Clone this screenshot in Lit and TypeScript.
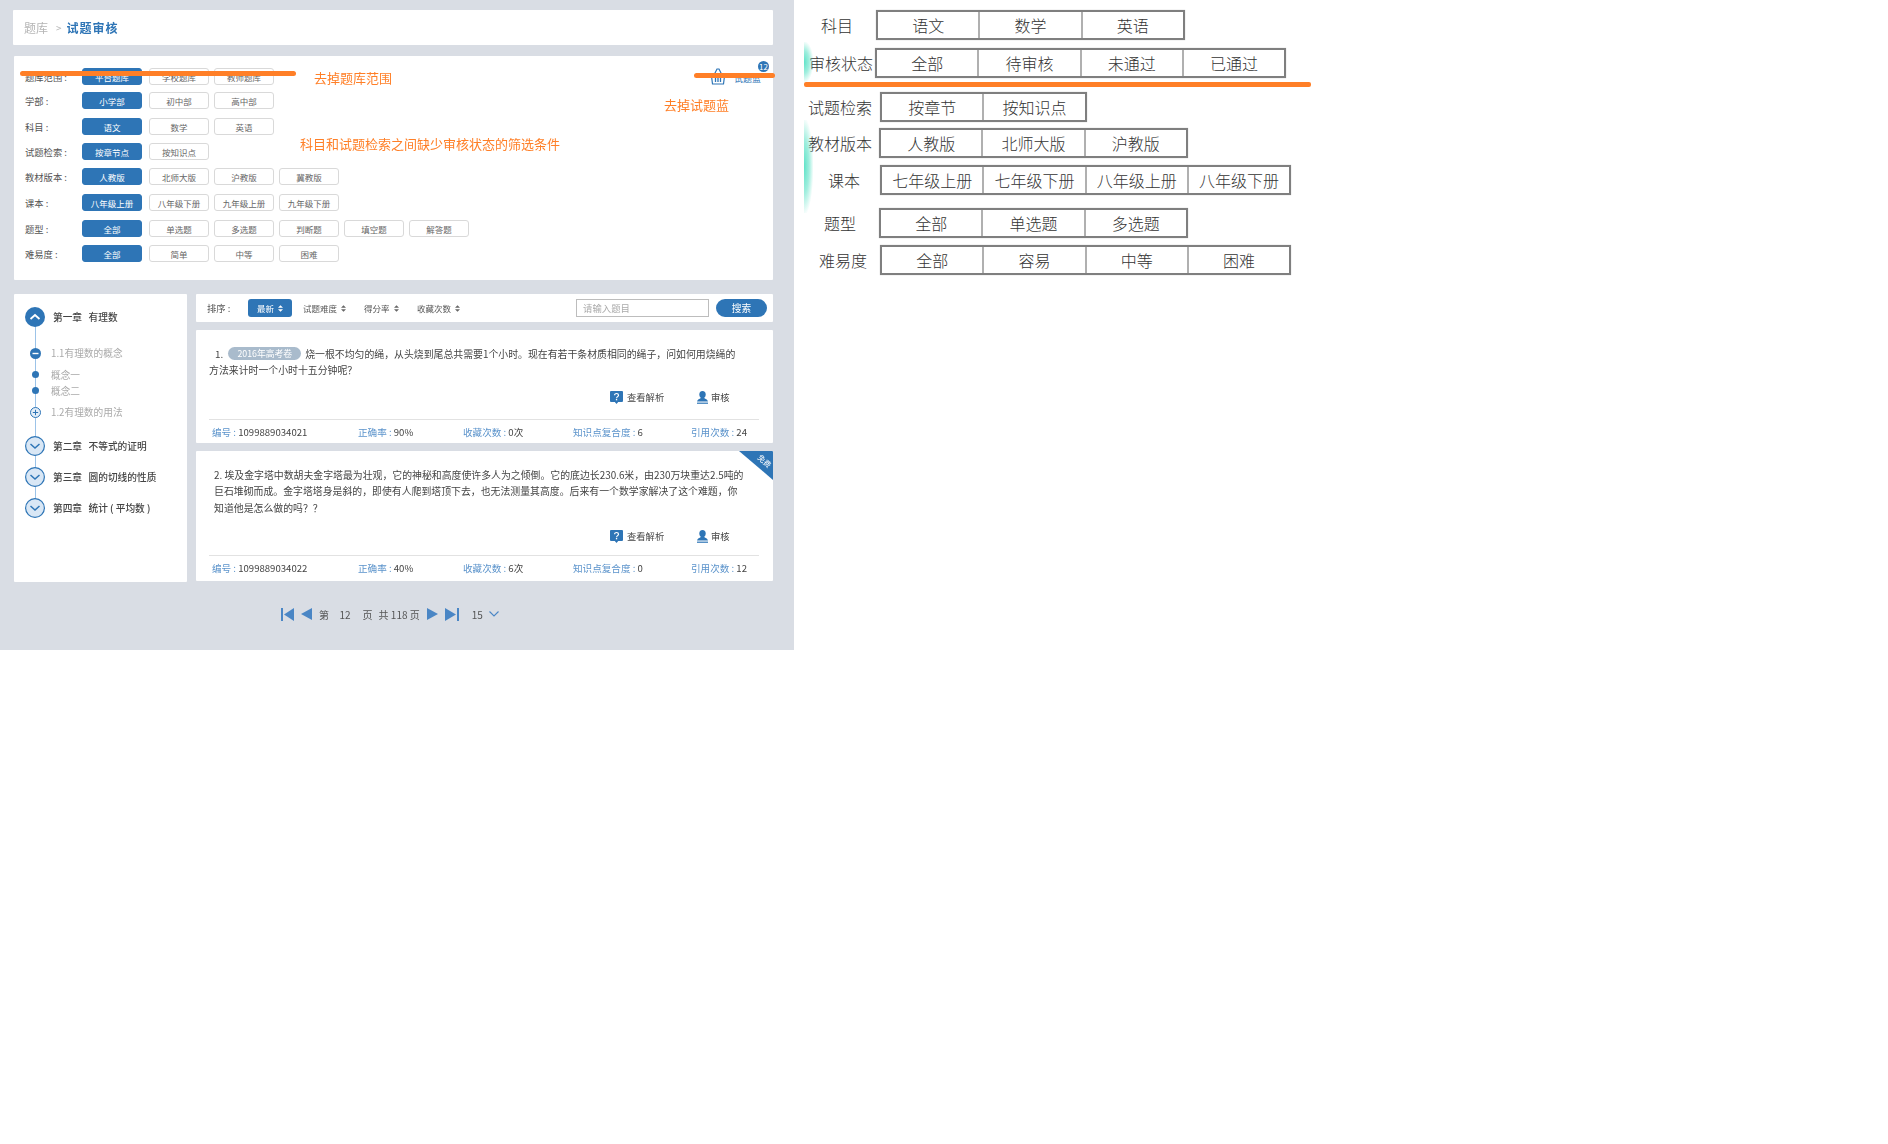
import { LitElement, html, css, svg } from "lit";
import { customElement } from "lit/decorators.js";

const FILTERS: [string, string[]][] = [
  ["题库范围 :", ["平台题库", "学校题库", "教师题库"]],
  ["学部 :", ["小学部", "初中部", "高中部"]],
  ["科目 :", ["语文", "数学", "英语"]],
  ["试题检索 :", ["按章节点", "按知识点"]],
  ["教材版本 :", ["人教版", "北师大版", "沪教版", "冀教版"]],
  ["课本 :", ["八年级上册", "八年级下册", "九年级上册", "九年级下册"]],
  ["题型 :", ["全部", "单选题", "多选题", "判断题", "填空题", "解答题"]],
  ["难易度 :", ["全部", "简单", "中等", "困难"]],
];

const TABLES = [
  { label: "科目", lx: 821, tx: 876, mt: 10, cells: ["语文", "数学", "英语"] },
  { label: "审核状态", lx: 809, tx: 875, mt: 8, cells: ["全部", "待审核", "未通过", "已通过"] },
  { label: "试题检索", lx: 808, tx: 880, mt: 5, cells: ["按章节", "按知识点"] },
  { label: "教材版本", lx: 808, tx: 879, mt: 6, cells: ["人教版", "北师大版", "沪教版"] },
  { label: "课本", lx: 828, tx: 880, mt: 7, cells: ["七年级上册", "七年级下册", "八年级上册", "八年级下册"] },
  { label: "题型", lx: 824, tx: 879, mt: 13, cells: ["全部", "单选题", "多选题"] },
  { label: "难易度", lx: 819, tx: 880, mt: 7, cells: ["全部", "容易", "中等", "困难"] },
];

const sortArrow = svg`<svg class="sa" width="5" height="7" viewBox="0 0 6 8"><path d="M3 0l3 3H0zM3 8L0 5h6z" fill="currentColor"/></svg>`;
const chevUp = html`<svg width="20" height="20" viewBox="0 0 20 20"><circle cx="10" cy="10" r="10" fill="#2e75b6"/><path d="M5.5 12l4.5-4 4.5 4" fill="none" stroke="#fff" stroke-width="1.8"/></svg>`;
const chevDown = html`<svg width="20" height="20" viewBox="0 0 20 20"><circle cx="10" cy="10" r="9.4" fill="#d9e7f5" stroke="#2e75b6" stroke-width="1.2"/><path d="M5.5 8l4.5 4 4.5-4" fill="none" stroke="#2e75b6" stroke-width="1.5"/></svg>`;
const minus = html`<svg width="11" height="11" viewBox="0 0 11 11"><circle cx="5.5" cy="5.5" r="5.5" fill="#2e75b6"/><rect x="2.5" y="4.8" width="6" height="1.4" fill="#fff"/></svg>`;
const plus = html`<svg width="11" height="11" viewBox="0 0 11 11"><circle cx="5.5" cy="5.5" r="5" fill="#e4eef8" stroke="#2e75b6"/><path d="M2.8 5.5h5.4M5.5 2.8v5.4" stroke="#2e75b6"/></svg>`;
const dot = html`<svg width="7" height="7" viewBox="0 0 7 7"><circle cx="3.5" cy="3.5" r="3.5" fill="#2e75b6"/></svg>`;
const helpIcon = html`<svg width="13" height="13" viewBox="0 0 13 13"><path d="M1 0h11a1 1 0 0 1 1 1v9a1 1 0 0 1-1 1H8.2L6.5 13 4.8 11H1a1 1 0 0 1-1-1V1a1 1 0 0 1 1-1z" fill="#2e75b6"/><path d="M4.6 4.2c0-2.3 3.9-2.3 3.9 0 0 1.5-1.9 1.4-1.9 3" fill="none" stroke="#fff" stroke-width="1.2"/><rect x="5.9" y="8" width="1.3" height="1.3" fill="#fff"/></svg>`;
const userIcon = html`<svg width="11" height="13" viewBox="0 0 11 13"><ellipse cx="5.5" cy="3.6" rx="3.2" ry="3.6" fill="#2e75b6"/><path d="M0 10.4c.4-2 2.6-2.4 3.8-3.4h3.4c1.2 1 3.4 1.4 3.8 3.4z" fill="#2e75b6"/><rect y="11.6" width="11" height="1.2" fill="#2e75b6"/></svg>`;

@customElement("app-root")
export class AppRoot extends LitElement {
  static styles = css`
    :host {
      display: block;
      width: 1888px;
      min-height: 1144px;
      background: #fff;
      font-family: "Noto Sans CJK SC", "Liberation Sans", sans-serif;
    }
    .page { display: flex; align-items: flex-start; }
    .left {
      position: relative;
      flex: 0 0 794px;
      height: 650px;
      background: #d9dde4;
      overflow: hidden;
    }
    .shot {
      display: flex;
      flex-direction: column;
      padding: 10px 21px 0 14px;
      filter: blur(0.35px);
      color: #444;
      font-size: 9.7px;
    }
    .card { background: #fff; border-radius: 1px; }
    .crumb {
      height: 35px;
      margin-left: -1px;
      display: flex;
      align-items: center;
      padding-left: 11px;
      font-size: 12px;
      color: #b5b5b5;
    }
    .crumb .sep { margin: 0 5px 0 8px; font-size: 10px; }
    .crumb b { color: #2e75b6; font-weight: 700; letter-spacing: 1px; font-size: 12px; }
    .filters {
      position: relative;
      margin-top: 11px;
      height: 224px;
      box-sizing: border-box;
      padding: 12px 0 0 11px;
      display: flex;
      flex-direction: column;
      gap: 8px;
    }
    .frow { display: flex; align-items: center; height: 17px; }
    .frow:nth-child(2) { margin-top: -1px; }
    .frow:nth-child(3), .frow:nth-child(6), .frow:nth-child(7) { margin-top: 1px; }
    .flabel { width: 57px; color: #555; white-space: nowrap; font-size: 9.3px; }
    .fbtns { display: flex; gap: 5px; }
    .fbtn {
      box-sizing: border-box;
      width: 60px;
      height: 17px;
      border: 1px solid #d9d9d9;
      border-radius: 3px;
      display: flex;
      align-items: center;
      justify-content: center;
      background: #fff;
      color: #666;
      font-size: 8.5px;
      white-space: nowrap;
    }
    .fbtn.on { background: #2e75b6; border-color: #2e75b6; color: #fff; margin-right: 2px; }
    .basket { position: absolute; right: -2px; top: 5px; width: 65px; height: 25px; color: #2e75b6; }
    .basket svg { position: absolute; left: 0; top: 7px; }
    .basket span.t { position: absolute; left: 24px; top: 12px; font-size: 9px; line-height: 12px; }
    .basket .badge {
      position: absolute;
      right: 6px;
      top: 0;
      width: 11px;
      height: 11px;
      border-radius: 50%;
      background: #2e75b6;
      color: #fff;
      font-size: 8px;
      line-height: 11px;
      text-align: center;
    }
    .bottom { display: flex; gap: 9px; margin-top: 14px; height: 288px; }
    .side { position: relative; flex: 0 0 173px; box-sizing: border-box; padding-top: 13px; }
    .tl-line { position: absolute; left: 20.5px; top: 23px; width: 1px; height: 191px; background: #9cc3e8; }
    .node { position: relative; display: flex; align-items: center; height: 16px; white-space: nowrap; color: #aaa; }
    .node .ic { flex: 0 0 42px; display: flex; justify-content: center; margin-right: -5px; }
    .node .ic svg { display: block; }
    .node.ch { height: 20px; color: #444; font-weight: 500; }
    .node.ch .ic { margin-right: -3px; }
    .ch .n { margin-right: 6.5px; }
    .m18 { margin-top: 18px; } .m5 { margin-top: 5.5px; } .m16 { margin-top: 16px; } .m11 { margin-top: 11px; }
    .main { flex: 1; display: flex; flex-direction: column; gap: 8px; }
    .sort { height: 28px; display: flex; align-items: center; padding: 0 6px 0 11px; color: #555; }
    .sort .lb { flex: 0 0 41px; font-size: 9.3px; }
    .sitem { display: flex; align-items: center; gap: 4px; white-space: nowrap; font-size: 8.5px; }
    .sitem .sa { color: #666; }
    .w61 { flex: 0 0 61px; } .w53 { flex: 0 0 53px; }
    .sitem.on {
      flex: 0 0 44px;
      height: 18px;
      justify-content: center;
      margin-right: 11px;
      border-radius: 3px;
      background: #2e75b6;
      color: #fff;
    }
    .sitem.on .sa { color: #fff; }
    .grow { flex: 1; }
    .inp {
      box-sizing: border-box;
      width: 133px;
      height: 18px;
      margin-right: 7px;
      border: 1px solid #bdbdbd;
      padding-left: 6px;
      line-height: 16px;
      color: #aaa;
      font-size: 9.4px;
    }
    .go {
      width: 51px;
      height: 18px;
      border-radius: 9px;
      background: #2e75b6;
      color: #fff;
      text-align: center;
      line-height: 18px;
    }
    .q { position: relative; display: flex; flex-direction: column; overflow: hidden; box-sizing: border-box; padding: 15.5px 14px 3px 13px; color: #444; }
    .q1 { height: 113px; }
    .q2 { height: 130px; padding-bottom: 5px; }
    .body { flex: 1; line-height: 16.8px; white-space: nowrap; font-size: 9.9px; }
    .q2 .body { padding-left: 5px; }
    .q1 .l1 { padding-left: 6px; display: flex; align-items: center; }
    .pill {
      width: 73px;
      height: 13px;
      margin: 0 4px 0 5px;
      border-radius: 7px;
      background: #a9bbcc;
      color: #fff;
      font-size: 8.8px;
      line-height: 13px;
      text-align: center;
    }
    .acts { display: flex; align-items: center; height: 18px; padding-left: 401px; margin-bottom: 13px; font-size: 9.3px; }
    .q2 .acts { margin-bottom: 10px; }
    .act { display: flex; align-items: center; gap: 4px; }
    .act svg { display: block; }
    .act.a1 { flex: 0 0 87px; }
    .act.a2 { gap: 3px; }
    .foot {
      border-top: 1px solid #e2e2e2;
      padding: 4px 0 0 3px;
      display: grid;
      grid-template-columns: 146px 105px 110px 118px 68px;
      line-height: 16px;
      white-space: pre;
      color: #444;
      font-size: 9.6px;
    }
    .foot i { font-style: normal; color: #5b93cb; }
    .corner {
      position: absolute;
      right: 0;
      top: 0;
      width: 34px;
      height: 29px;
      background: #2e75b6;
      clip-path: polygon(0 0, 100% 0, 100% 100%);
    }
    .corner span {
      position: absolute;
      right: 1px;
      top: 5px;
      transform: rotate(42deg);
      color: #fff;
      font-size: 7.5px;
      line-height: 10px;
    }
    .pager {
      display: flex;
      align-items: center;
      height: 16px;
      margin: 24px 0 0 267px;
      color: #555;
      font-size: 10px;
      white-space: nowrap;
    }
    .pager svg { display: block; flex: none; }
    .ml7 { margin-left: 7px; } .ml12 { margin-left: 12px; } .ml11 { margin-left: 10.5px; } .ml6 { margin-left: 6px; } .ml13 { margin-left: 13px; }
    .note { position: absolute; color: #ff7f27; font-size: 13px; line-height: 18px; white-space: nowrap; }
    .n1 { left: 314px; top: 69px; }
    .n2 { left: 664px; top: 96px; }
    .n3 { left: 300px; top: 135px; }
    .strike { position: absolute; background: #ff7f27; border-radius: 3px; height: 5px; }
    .s1 { left: 20px; top: 71px; width: 276px; }
    .s2 { left: 694px; top: 73px; width: 81px; }

    .right { position: relative; flex: 1; height: 300px; color: #333; font-weight: 300; }
    .trow { display: flex; align-items: center; height: 30px; font-size: 16px; white-space: nowrap; }
    .tlabel { flex: none; }
    .tbl {
      display: flex;
      flex: none;
      box-sizing: border-box;
      height: 30px;
      border: 2px solid #7f7f7f;
      box-shadow: 0 0 1px #bbb;
    }
    .tcell {
      box-sizing: border-box;
      width: 102.3px;
      display: flex;
      align-items: center;
      justify-content: center;
      border-left: 2px solid #b0b0b0;
    }
    .tcell:first-child { border-left: 0; width: 100.3px; }
    .rule { height: 5px; margin: 4px 0 0 10px; width: 507px; background: #ff7f27; border-radius: 2px; }
    .glow { position: absolute; left: 10px; width: 9px; background: radial-gradient(ellipse at left center, #5fe3c8 0%, rgba(95, 227, 200, 0.6) 40%, rgba(95, 227, 200, 0) 75%); }
    .g1 { top: 42px; height: 40px; }
    .g2 { top: 120px; height: 93px; }
  `;

  private filters() {
    return FILTERS.map(
      ([label, btns]) => html`<div class="frow">
        <div class="flabel">${label}</div>
        <div class="fbtns">${btns.map((b, i) => html`<div class="fbtn ${i === 0 ? "on" : ""}">${b}</div>`)}</div>
      </div>`
    );
  }

  private foot(a: string, b: string, c: string, d: string, e: string) {
    return html`<div class="foot"><span><i>编号 : </i>${a}</span><span><i>正确率 : </i>${b}</span><span><i>收藏次数 : </i>${c}</span><span><i>知识点复合度 : </i>${d}</span><span><i>引用次数 : </i>${e}</span></div>`;
  }

  private acts() {
    return html`<div class="acts">
      <div class="act a1">${helpIcon}<span>查看解析</span></div>
      <div class="act a2">${userIcon}<span>审核</span></div>
    </div>`;
  }

  render() {
    return html`<div class="page">
      <div class="left">
        <div class="shot">
          <div class="card crumb"><span>题库</span><span class="sep">&gt;</span><b>试题审核</b></div>
          <div class="card filters">
            ${this.filters()}
            <div class="basket">
              <svg width="16" height="17" viewBox="0 0 16 17" fill="none" stroke="#2e75b6">
                <path d="M4 7l3-6h2l3 6" stroke-width="1.2"/>
                <path d="M0 7h16" stroke-width="2"/>
                <path d="M1.5 8l1 8h11l1-8z" stroke-width="1.2"/>
                <path d="M5.5 9v5M8 9v5M10.5 9v5" stroke-width="1.3"/>
              </svg>
              <span class="t">试题篮</span>
              <span class="badge">12</span>
            </div>
          </div>
          <div class="bottom">
            <div class="card side">
              <div class="tl-line"></div>
              <div class="node ch"><span class="ic">${chevUp}</span><span class="n">第一章</span><span>有理数</span></div>
              <div class="node m18"><span class="ic">${minus}</span><span>1.1有理数的概念</span></div>
              <div class="node m5"><span class="ic">${dot}</span><span>概念一</span></div>
              <div class="node"><span class="ic">${dot}</span><span>概念二</span></div>
              <div class="node m5"><span class="ic">${plus}</span><span>1.2有理数的用法</span></div>
              <div class="node ch m16"><span class="ic">${chevDown}</span><span class="n">第二章</span><span>不等式的证明</span></div>
              <div class="node ch m11"><span class="ic">${chevDown}</span><span class="n">第三章</span><span>圆的切线的性质</span></div>
              <div class="node ch m11"><span class="ic">${chevDown}</span><span class="n">第四章</span><span>统计 ( 平均数 )</span></div>
            </div>
            <div class="main">
              <div class="card sort">
                <span class="lb">排序 :</span>
                <div class="sitem on">最新${sortArrow}</div>
                <div class="sitem w61">试题难度${sortArrow}</div>
                <div class="sitem w53">得分率${sortArrow}</div>
                <div class="sitem">收藏次数${sortArrow}</div>
                <div class="grow"></div>
                <div class="inp">请输入题目</div>
                <div class="go">搜索</div>
              </div>
              <div class="card q q1">
                <div class="body">
                  <div class="l1"><span>1.</span><span class="pill">2016年高考卷</span><span>烧一根不均匀的绳，从头烧到尾总共需要1个小时。现在有若干条材质相同的绳子，问如何用烧绳的</span></div>
                  <div>方法来计时一个小时十五分钟呢？</div>
                </div>
                ${this.acts()}
                ${this.foot("1099889034021", "90%", "0次", "6", "24")}
              </div>
              <div class="card q q2">
                <div class="corner"><span>免费</span></div>
                <div class="body">
                  <div>2. 埃及金字塔中数胡夫金字塔最为壮观，它的神秘和高度使许多人为之倾倒。它的底边长230.6米，由230万块重达2.5吨的</div>
                  <div>巨石堆砌而成。金字塔塔身是斜的，即使有人爬到塔顶下去，也无法测量其高度。后来有一个数学家解决了这个难题，你</div>
                  <div>知道他是怎么做的吗？？</div>
                </div>
                ${this.acts()}
                ${this.foot("1099889034022", "40%", "6次", "0", "12")}
              </div>
            </div>
          </div>
          <div class="pager">
            <svg width="13" height="13" viewBox="0 0 13 13"><rect width="2" height="13" fill="#4a86c5"/><path d="M13 0v13L3 6.5z" fill="#4a86c5"/></svg>
            <svg class="ml7" width="11" height="12" viewBox="0 0 11 12"><path d="M11 0v12L0 6z" fill="#4a86c5"/></svg>
            <span class="ml7">第</span>
            <span class="ml11">12</span>
            <span class="ml12">页</span>
            <span class="ml6">共 118 页</span>
            <svg class="ml7" width="11" height="12" viewBox="0 0 11 12"><path d="M0 0v12l11-6z" fill="#4a86c5"/></svg>
            <svg class="ml7" width="14" height="13" viewBox="0 0 14 13"><rect x="12" width="2" height="13" fill="#4a86c5"/><path d="M0 0v13l11-6.5z" fill="#4a86c5"/></svg>
            <span class="ml13">15</span>
            <svg class="ml6" width="10" height="6" viewBox="0 0 10 6"><path d="M.5.5l4.5 4.5 4.5-4.5" fill="none" stroke="#4a86c5" stroke-width="1.1"/></svg>
          </div>
        </div>
        <span class="strike s1"></span>
        <span class="strike s2"></span>
        <span class="note n1">去掉题库范围</span>
        <span class="note n2">去掉试题蓝</span>
        <span class="note n3">科目和试题检索之间缺少审核状态的筛选条件</span>
      </div>
      <div class="right">
        <span class="glow g1"></span>
        <span class="glow g2"></span>
        ${TABLES.map(
          (t, i) => html`
            <div class="trow" style="margin-top:${t.mt}px">
              <span class="tlabel" style="margin-left:${t.lx - 794}px;width:${t.tx - t.lx}px">${t.label}</span>
              <div class="tbl">${t.cells.map((c) => html`<div class="tcell">${c}</div>`)}</div>
            </div>
            ${i === 1 ? html`<div class="rule"></div>` : ""}
          `
        )}
      </div>
    </div>`;
  }
}
